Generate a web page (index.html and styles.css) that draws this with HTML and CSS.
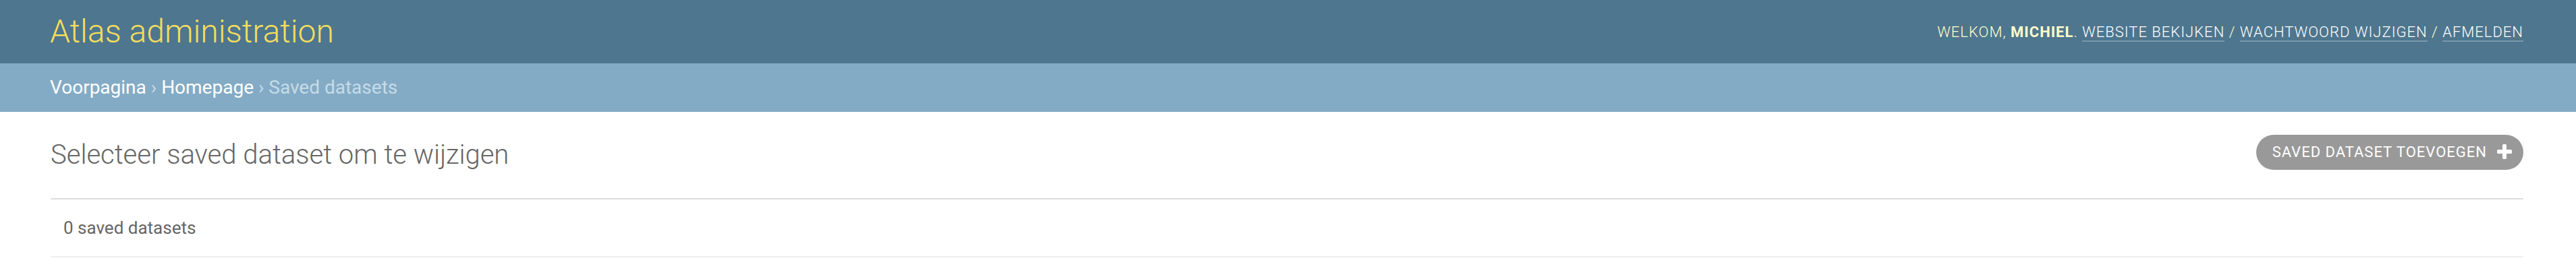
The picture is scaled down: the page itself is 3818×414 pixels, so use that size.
FILE: index.html
```html
<!DOCTYPE html>
<html lang="nl">
<head>
<meta charset="utf-8">
<title>Selecteer saved dataset om te wijzigen | Atlas administration</title>
<link rel="stylesheet" href="styles.css">
</head>
<body>
<div class="container">
  <header class="header">
    <div class="branding">
      <h1 class="site-name"><a href="#">Atlas administration</a></h1>
    </div>
    <div class="user-tools">Welkom, <strong>Michiel</strong>. <a href="#">Website bekijken</a> / <a href="#">Wachtwoord wijzigen</a> / <a href="#">Afmelden</a></div>
  </header>
  <nav class="breadcrumbs"><a href="#">Voorpagina</a> › <a href="#">Homepage</a> › Saved datasets</nav>
  <main class="content">
    <div class="content-head">
      <h1 class="page-title">Selecteer saved dataset om te wijzigen</h1>
      <ul class="object-tools">
        <li><a class="addlink" href="#"><span>Saved dataset toevoegen</span><svg class="add-icon" width="28" height="28" viewBox="0 0 1792 1792" aria-hidden="true"><path fill="#ffffff" d="M1600 736v192q0 40-28 68t-68 28h-416v416q0 40-28 68t-68 28h-192q-40 0-68-28t-28-68v-416h-416q-40 0-68-28t-28-68v-192q0-40 28-68t68-28h416v-416q0-40 28-68t68-28h192q40 0 68 28t28 68v416h416q40 0 68 28t28 68z"/></svg></a></li>
      </ul>
    </div>
    <div class="changelist">
      <p class="paginator">0 saved datasets</p>
    </div>
  </main>
</div>
</body>
</html>
```
FILE: styles.css
```css
html, body {
  margin: 0;
  padding: 0;
}

body {
  font-family: Roboto, "Liberation Sans", Arial, sans-serif;
  color: #333;
  background: #fff;
}

a {
  text-decoration: none;
}

.header {
  display: flex;
  justify-content: space-between;
  align-items: center;
  padding: 20px 78px 20px 74px;
  background: #4e768e;
  color: #ffc;
}

.site-name {
  margin: 0;
  font-size: 48px;
  font-weight: 300;
  line-height: 54px;
}

.site-name a {
  color: #f5dd5d;
}

.user-tools {
  font-size: 22px;
  font-weight: 300;
  letter-spacing: 1px;
  text-transform: uppercase;
  color: #ffc;
  white-space: nowrap;
}

.user-tools strong {
  font-weight: 700;
}

.user-tools a {
  color: #fff;
  border-bottom: 2px solid rgba(255, 255, 255, 0.25);
}

.breadcrumbs {
  padding: 20px 78px 20px 74px;
  background: #84abc5;
  color: #c4dce8;
  font-size: 28px;
  line-height: 32px;
}

.breadcrumbs a {
  color: #fff;
}

.content {
  padding: 34px 78px 0 75px;
}

.content-head {
  display: flex;
  justify-content: space-between;
  align-items: flex-start;
}

.page-title {
  margin: 6px 0 40px;
  font-size: 40px;
  font-weight: 300;
  line-height: 48px;
  color: #666;
}

.object-tools {
  list-style: none;
  margin: 0;
  padding: 0;
}

.addlink {
  display: flex;
  align-items: center;
  gap: 12px;
  padding: 6px 14px 6px 24px;
  border-radius: 30px;
  background: #999;
  color: #fff;
  font-size: 22px;
  font-weight: 400;
  letter-spacing: 1px;
  line-height: 40px;
  text-transform: uppercase;
}

.add-icon {
  display: block;
  flex: none;
}

.changelist {
  margin: 0;
}

.paginator {
  margin: 0;
  padding: 20px 19px;
  border-top: 2px solid #dddddd;
  border-bottom: 2px solid #eeeeee;
  font-size: 26px;
  line-height: 44px;
  color: #666;
}
```
